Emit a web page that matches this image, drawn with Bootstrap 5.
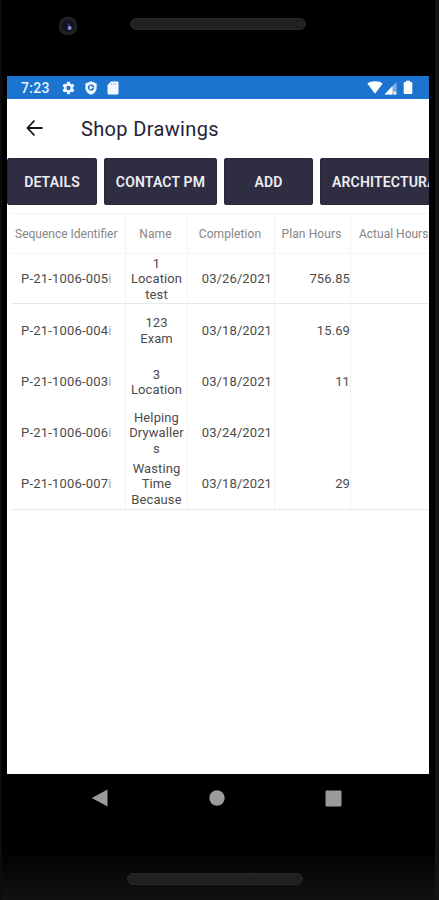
<!DOCTYPE html>
<html lang="en">
<head>
<meta charset="utf-8">
<meta name="viewport" content="width=device-width, initial-scale=1">
<title>Shop Drawings</title>
<link href="https://cdn.jsdelivr.net/npm/bootstrap@5.3.0/dist/css/bootstrap.min.css" rel="stylesheet">
<style>
html{background:#000}
body{width:439px;height:900px;background:#000;font-family:Roboto,"Liberation Sans",sans-serif}
.phone{width:439px;height:900px;background:linear-gradient(#000 0 850px,#121212 900px);border-left:2px solid #0c0c0c;border-right:4px solid #141414;padding:0 6px 0 5px}
.bezel-top{height:76px;padding:15px 0 0 51px}
.camera{width:20px;height:20px}
.speaker{width:176px;height:12px;border-radius:6px;background:#20201e;border:1px solid #292927}
.speaker-top{margin:3px 0 0 52px}
.screen{width:422px;height:698px;background:#fff}
.statusbar{height:23px;background:#1b74d0;color:#e9f3fd;padding:0 15px 0 14px}
.clock{font-size:14px;font-weight:500;letter-spacing:.3px;width:41px;line-height:24px}
.appbar{height:59px;color:#242237;padding-left:18px}
.apptitle{font-size:20px;letter-spacing:.35px;margin-left:36px;line-height:24px}
.actions{height:47px;gap:7px}
.act{--bs-btn-bg:#2f2d41;--bs-btn-color:#eeeef4;--bs-btn-border-color:#29263d;--bs-btn-hover-bg:#3b3950;--bs-btn-hover-color:#fff;--bs-btn-border-radius:2px;font-size:14px;font-weight:600;letter-spacing:.17px;padding:1px 0 0;height:47px;line-height:20px;white-space:nowrap}
.w-a{width:90px}.w-b{width:113px}.w-c{width:89px}.w-d{width:150px;text-align:left;padding-left:11px}
.sheet{display:grid;grid-template-columns:115px 62px 87px 76px 90px;margin:8px 0 0 4px;border-top:1px solid #f4f4f4;width:430px}
.sheet>div{display:flex;align-items:center;border-right:1px solid #f3f3f3;font-size:13px;line-height:15.5px;color:#4c4c4c;height:51px;padding-top:1px}
.sheet>.hd{height:40px;color:#858585;font-size:12px;border-bottom:1px solid #f5f5f5;white-space:nowrap;padding-top:3px}
.sheet>.r1{height:50px;border-bottom:1px solid #e9e9e9}
.sheet>.r2{height:52px}
.sheet>.end{height:52px;border-bottom:1px solid #e9e9e9}
.sheet>.seq{padding-left:10px;letter-spacing:.2px}
.seq span{color:#aaa}
.sheet>.nm{justify-content:center;text-align:center;letter-spacing:.1px}
.sheet>.hd.nm{padding-right:2px}
.sheet>.num{justify-content:flex-end;padding-right:2px;letter-spacing:.1px}
.sheet>.hrs{padding-right:0}
.navkeys{height:48px;padding:0 87px 0 84px}
.speaker-bottom{margin:51px 0 0 120px}
</style>
<script src="https://cdn.jsdelivr.net/npm/bootstrap@5.3.0/dist/js/bootstrap.bundle.min.js"></script>
</head>
<body class="m-0 overflow-hidden">
<div class="phone overflow-hidden">
  <div class="bezel-top d-flex align-items-start">
    <svg class="camera" viewBox="0 0 20 20"><circle cx="10" cy="11" r="9.5" fill="#202023"/><circle cx="10" cy="11" r="6" fill="#11121f"/><path d="M8 7l4 3v4z" fill="#2c3778"/><circle cx="11.6" cy="13" r="2" fill="#8d91d3"/></svg>
    <div class="speaker speaker-top"></div>
  </div>
  <main class="screen overflow-hidden">
    <div class="statusbar d-flex align-items-center">
      <span class="clock">7:23</span>
      <svg width="13" height="14" viewBox="0 0 14 14"><g fill="#eef6ff"><circle cx="7" cy="7" r="5"/><rect x="5.3" y=".4" width="3.4" height="13.2" rx=".6"/><rect x="5.3" y=".4" width="3.4" height="13.2" rx=".6" transform="rotate(60 7 7)"/><rect x="5.3" y=".4" width="3.4" height="13.2" rx=".6" transform="rotate(120 7 7)"/></g><circle cx="7" cy="7" r="2.3" fill="#1b74d0"/></svg>
      <svg class="ms-2 me-2" width="16" height="16" viewBox="0 0 17 16"><path d="M8.500.8l6 2.400v4.500c0 3.500-2.500 6.300-6 7.500-3.500-1.200-6-4-6-7.500V3.200z" fill="#eef6ff"/><circle cx="8.500" cy="7.500" r="3.300" fill="#1b74d0"/><path d="M7 5l4.300 2.500L7 10z" fill="#eef6ff"/></svg>
      <svg width="12" height="14" viewBox="0 0 12 14"><path d="M4 .5h6.500a1 1 0 011 1V12.500a1 1 0 01-1 1h-9a1 1 0 01-1-1V4z" fill="#f4f9ff"/><path d="M4.500 2v2M6.500 2v2M8.500 2v2" stroke="#a6caef" stroke-width=".9"/></svg>
      <svg class="ms-auto" width="16" height="13" viewBox="0 0 16 13"><path d="M.3 2.500C4.500-.4 11.500-.4 15.700 2.500L8 12.800z" fill="#fff"/></svg>
      <svg class="ms-0" width="15" height="14" viewBox="0 0 14 14"><path d="M13 1v12.500H1z" fill="#7fb2e8"/><path d="M9 5v8.500H1z" fill="#fff"/><path d="M10.300 9.500h2.500v4h-2.500z" fill="#e8f2fc"/><path d="M10 8.200l3 3" stroke="#1b74d0"/></svg>
      <svg class="ms-1" width="12" height="15" viewBox="0 0 12 15"><path d="M4 .7h4v1.200h1.500q.8 0 .8.800v10.500q0 .8-.8.800h-7q-.8 0-.8-.8V2.700q0-.8.800-.8H4z" fill="#fff"/></svg>
    </div>
    <header class="appbar d-flex align-items-center">
      <svg width="20" height="20" viewBox="0 0 20 20" fill="none" stroke="#171717" stroke-width="1.800"><path d="M17.500 9H3M9.500 1.500L2.500 9l7 7.500"/></svg>
      <h1 class="apptitle mb-0 fw-normal">Shop Drawings</h1>
    </header>
    <div class="actions d-flex">
      <button class="btn act w-a flex-shrink-0">DETAILS</button>
      <button class="btn act w-b flex-shrink-0">CONTACT PM</button>
      <button class="btn act w-c flex-shrink-0">ADD</button>
      <button class="btn act w-d flex-shrink-0">ARCHITECTURAL</button>
    </div>
    <div class="sheet">
      <div class="hd ps-1">Sequence Identifier</div><div class="hd nm">Name</div><div class="hd nm">Completion</div><div class="hd nm">Plan Hours</div><div class="hd ps-2">Actual Hours</div>
      <div class="r1 seq">P-21-1006-005<span>i</span></div><div class="r1 nm">1<br>Location<br>test</div><div class="r1 num">03/26/2021</div><div class="r1 num hrs">756.85</div><div class="r1"></div>
      <div class="r2 seq">P-21-1006-004<span>i</span></div><div class="r2 nm">123<br>Exam</div><div class="r2 num">03/18/2021</div><div class="r2 num hrs">15.69</div><div class="r2"></div>
      <div class="seq">P-21-1006-003<span>i</span></div><div class="nm">3<br>Location</div><div class="num">03/18/2021</div><div class="num hrs">11</div><div></div>
      <div class="seq">P-21-1006-006<span>i</span></div><div class="nm">Helping<br>Drywaller<br>s</div><div class="num">03/24/2021</div><div class="num hrs"></div><div></div>
      <div class="end seq">P-21-1006-007<span>i</span></div><div class="end nm">Wasting<br>Time<br>Because</div><div class="end num">03/18/2021</div><div class="end num hrs">29</div><div class="end"></div>
    </div>
  </main>
  <nav class="navkeys d-flex align-items-center justify-content-between">
    <svg width="17" height="18" viewBox="0 0 17 18"><path d="M16.500.5v17L.8 9z" fill="#9b9b9b"/></svg>
    <svg width="16" height="16" viewBox="0 0 16 16"><circle cx="8" cy="8" r="7.700" fill="#9b9b9b"/></svg>
    <svg width="17" height="17" viewBox="0 0 17 17"><rect x=".5" y=".5" width="16" height="16" rx="1" fill="#9b9b9b"/></svg>
  </nav>
  <div class="speaker speaker-bottom"></div>
</div>
</body>
</html>
